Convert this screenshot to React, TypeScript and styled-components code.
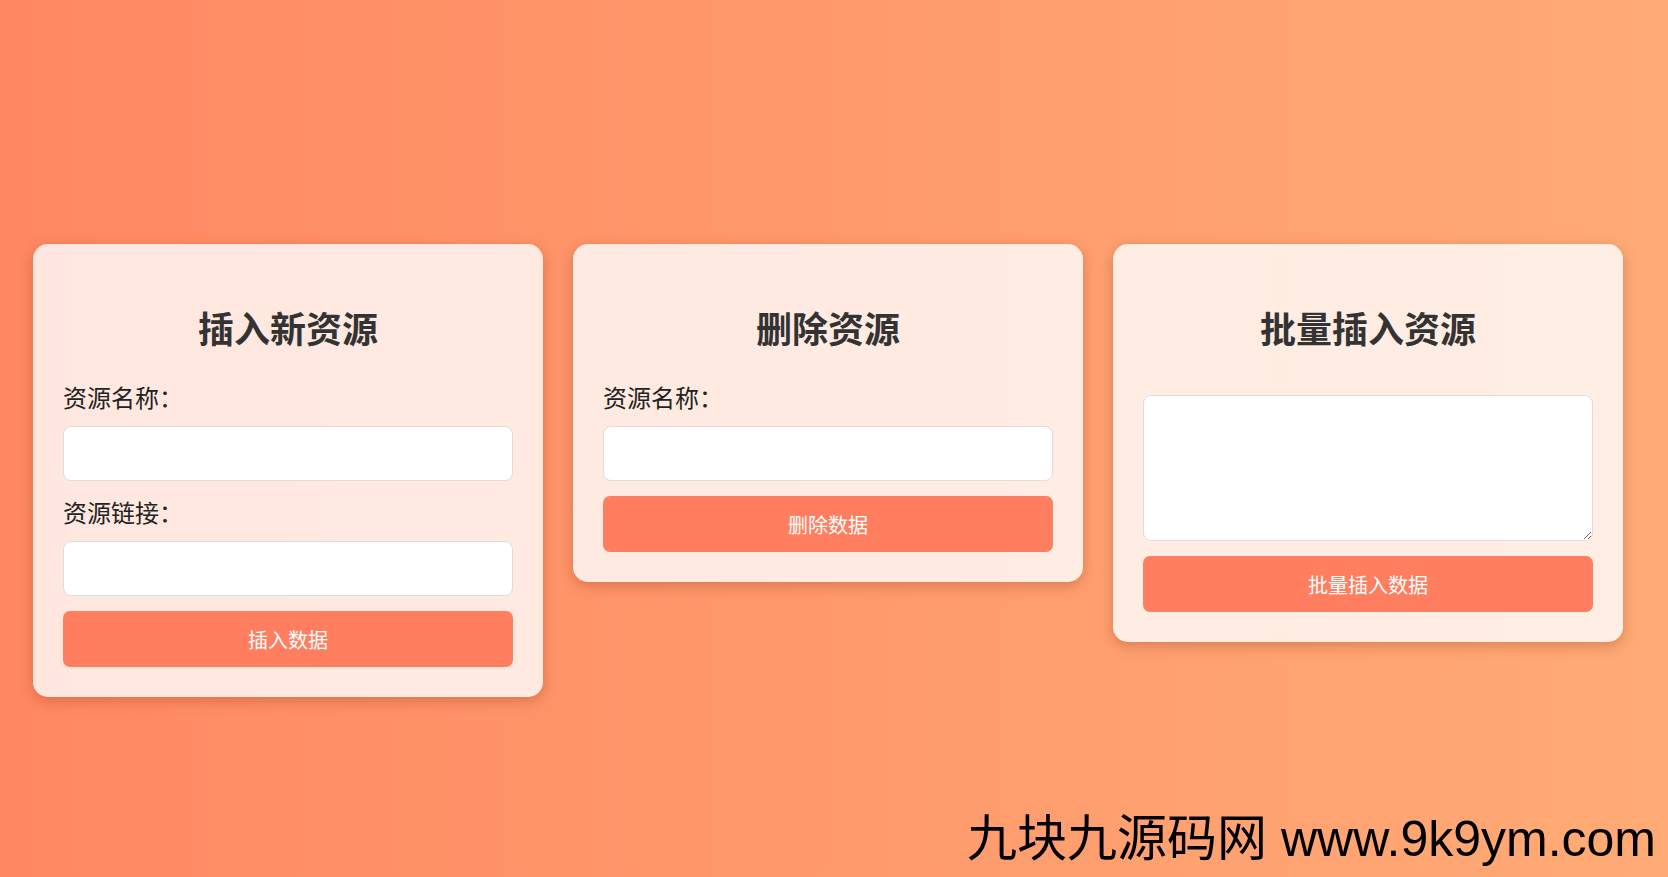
import React, { useState } from "react";
import styled, { createGlobalStyle } from "styled-components";

const GlobalStyle = createGlobalStyle`
  html, body {
    margin: 0;
    padding: 0;
  }

  body {
    min-height: 100vh;
    background: linear-gradient(to right, #ff8862, #ffab76);
    font-family: "Noto Sans CJK SC", "Noto Sans", sans-serif;
    color: #222;
  }
`;

const App: React.FC = () => {
  const [insertName, setInsertName] = useState<string>("");
  const [insertLink, setInsertLink] = useState<string>("");
  const [deleteName, setDeleteName] = useState<string>("");
  const [batchText, setBatchText] = useState<string>("");

  return (
    <>
      <GlobalStyle />
      <Page>
        <Card>
          <CardTitle>插入新资源</CardTitle>
          <FieldLabel htmlFor="insert-name">资源名称：</FieldLabel>
          <TextInput
            id="insert-name"
            value={insertName}
            onChange={(e) => setInsertName(e.target.value)}
          />
          <FieldLabel htmlFor="insert-link">资源链接：</FieldLabel>
          <TextInput
            id="insert-link"
            value={insertLink}
            onChange={(e) => setInsertLink(e.target.value)}
          />
          <ActionButton>插入数据</ActionButton>
        </Card>

        <Card>
          <CardTitle>删除资源</CardTitle>
          <FieldLabel htmlFor="delete-name">资源名称：</FieldLabel>
          <TextInput
            id="delete-name"
            value={deleteName}
            onChange={(e) => setDeleteName(e.target.value)}
          />
          <ActionButton>删除数据</ActionButton>
        </Card>

        <Card>
          <CardTitle>批量插入资源</CardTitle>
          <BatchArea
            value={batchText}
            onChange={(e) => setBatchText(e.target.value)}
          />
          <ActionButton>批量插入数据</ActionButton>
        </Card>
      </Page>
      <Watermark>九块九源码网 www.9k9ym.com</Watermark>
    </>
  );
};

export default App;

const Page = styled.div`
  display: flex;
  align-items: flex-start;
  gap: 30px;
  padding: 244px 0 0 33px;
  box-sizing: border-box;
  min-height: 100vh;
`;

const Card = styled.div`
  flex: 0 0 510px;
  box-sizing: border-box;
  display: flex;
  flex-direction: column;
  gap: 15px;
  padding: 30px;
  background-color: rgba(255, 255, 255, 0.8);
  border-radius: 15px;
  box-shadow: 0 4px 14px rgba(150, 60, 30, 0.35);
`;

const CardTitle = styled.h2`
  margin: 28px 0 14px;
  text-align: center;
  font-size: 36px;
  line-height: 50px;
  font-weight: 700;
  color: #333;
`;

const FieldLabel = styled.label`
  display: block;
  margin-bottom: -2px;
  font-size: 24px;
  line-height: 32px;
  color: #222;
`;

const TextInput = styled.input`
  box-sizing: border-box;
  width: 100%;
  height: 55px;
  padding: 0 14px;
  border: 1px solid #ddd;
  border-radius: 8px;
  background: #fff;
  font-size: 20px;
  font-family: inherit;
  outline: none;
`;

const BatchArea = styled.textarea`
  box-sizing: border-box;
  width: 100%;
  height: 146px;
  margin-top: 14px;
  padding: 12px 14px;
  border: 1px solid #ddd;
  border-radius: 8px;
  background: #fff;
  font-size: 18px;
  font-family: inherit;
  outline: none;
`;

const ActionButton = styled.button`
  width: 100%;
  height: 56px;
  border: none;
  border-radius: 7px;
  background-color: #ff7e5f;
  color: #fff;
  font-size: 20px;
  font-family: inherit;
  cursor: pointer;

  &:hover {
    background-color: #ff6f4d;
  }
`;

const Watermark = styled.div`
  position: fixed;
  right: 12px;
  bottom: 8px;
  font-family: "Liberation Sans", "Noto Sans CJK SC", sans-serif;
  font-size: 50px;
  line-height: 60px;
  color: #000;
  white-space: nowrap;
`;
